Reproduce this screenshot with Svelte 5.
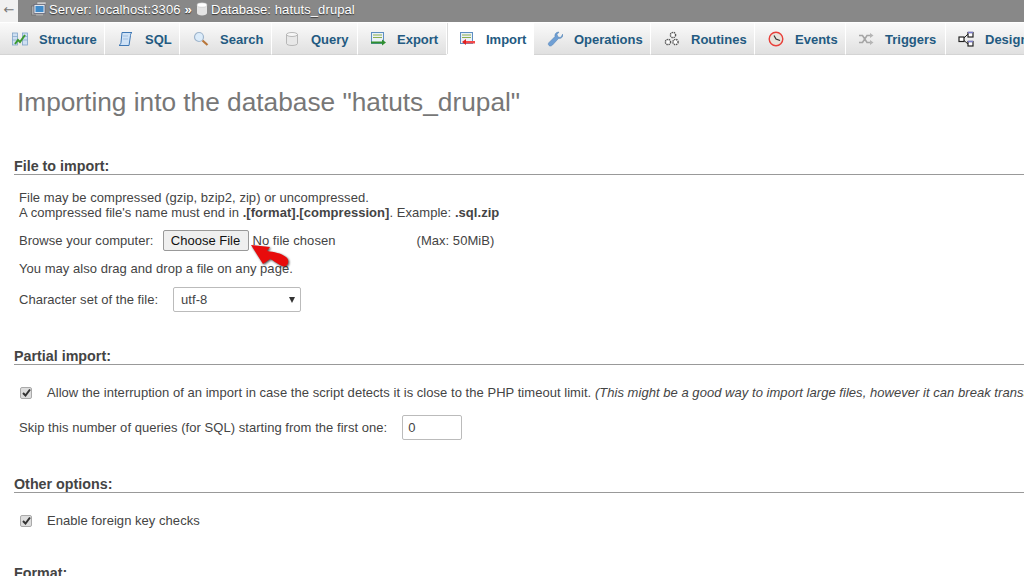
<script lang="ts">
  const tabs = [
    { name: 'Structure', icon: 'structure', w: 105, pad: 12 },
    { name: 'SQL', icon: 'sql', w: 75, pad: 13 },
    { name: 'Search', icon: 'search', w: 92, pad: 13 },
    { name: 'Query', icon: 'query', w: 86, pad: 12 },
    { name: 'Export', icon: 'export', w: 89, pad: 12 },
    { name: 'Import', icon: 'import', w: 87, pad: 12, active: true },
    { name: 'Operations', icon: 'ops', w: 117, pad: 13 },
    { name: 'Routines', icon: 'routines', w: 104, pad: 13 },
    { name: 'Events', icon: 'events', w: 91, pad: 13 },
    { name: 'Triggers', icon: 'triggers', w: 100, pad: 12 },
    { name: 'Designer', icon: 'designer', w: 100, pad: 12 }
  ];
</script>

<div class="page">
  <div class="crumbs">
    <span class="back">←</span>
    <svg class="crumb-ico" width="16" height="16" viewBox="0 0 16 16">
      <rect x="0.500" y="5" width="5" height="9" fill="#aaa" stroke="#666" stroke-width=".6" />
      <rect x="6" y="1" width="9" height="3" fill="#ccc" stroke="#777" stroke-width=".5" />
      <rect x="3" y="3.500" width="11" height="9" fill="#dfe6ee" stroke="#667" stroke-width=".8" />
      <rect x="4.500" y="5" width="8" height="6" fill="#3f8ac9" />
      <rect x="5" y="13" width="7" height="1.500" fill="#aaa" />
    </svg>
    <span>Server: localhost:3306</span>
    <b class="sep">»</b>
    <svg class="crumb-ico db" width="12" height="14" viewBox="0 0 12 14">
      <path d="M1 3v8c0 1.500 2.200 2.500 5 2.500s5-1 5-2.500V3z" fill="#e4e4e4" />
      <ellipse cx="6" cy="3" rx="5" ry="2.200" fill="#fff" stroke="#bbb" stroke-width=".5" />
    </svg>
    <span>Database: hatuts_drupal</span>
  </div>

  <nav class="tabs">
    {#each tabs as tab}
      <a class="tab" class:active={tab.active} style="flex-basis: {tab.w}px; padding-left: {tab.pad}px">
        <svg width="16" height="16" viewBox="0 0 16 16">
          {#if tab.icon === 'structure'}
            <rect x="0.500" y="2" width="5" height="12" fill="#cfe0f2" stroke="#7fa3c9" stroke-width=".8" />
            <rect x="10.500" y="2" width="5" height="12" fill="#cfe0f2" stroke="#7fa3c9" stroke-width=".8" />
            <path d="M0.500 5.500h5M0.500 9h5M10.500 5.500h5M10.500 9h5" stroke="#7fa3c9" stroke-width=".7" />
            <path d="M3 13l3-4 2 2 5-7" fill="none" stroke="#3b9a2f" stroke-width="2" />
          {:else if tab.icon === 'sql'}
            <path d="M4 1.500h10c-1.500 1-1.500 2-1.500 3L11 14.500H1c1.500-1 1.800-2 2-3z" fill="#cfe2f6" stroke="#3f78b5" stroke-width="1" />
            <path d="M5 5h5M5 8h5" stroke="#8fb2d6" stroke-width=".7" />
          {:else if tab.icon === 'search'}
            <circle cx="6" cy="6" r="4.500" fill="#dcecfa" stroke="#9fb5cc" stroke-width="1.200" />
            <path d="M9.500 9.500l5 4.500" stroke="#b8763a" stroke-width="2.200" />
          {:else if tab.icon === 'query'}
            <path d="M2.500 3.500v9c0 1.200 2.500 2 5.500 2s5.500-.8 5.500-2v-9z" fill="#e8e8e8" stroke="#aaa" stroke-width=".8" />
            <ellipse cx="8" cy="3.500" rx="5.500" ry="2" fill="#f6f6f6" stroke="#aaa" stroke-width=".8" />
          {:else if tab.icon === 'export'}
            <rect x="1.500" y="1.500" width="12" height="11" fill="#eaf1f8" stroke="#5d8fc2" />
            <path d="M3 4h9M3 6.500h9" stroke="#8db04f" stroke-width="1" />
            <path d="M1 11.500h11" stroke="#2f8f2f" stroke-width="2" />
            <path d="M12 8.500l4 3-4 3z" fill="#2f8f2f" />
          {:else if tab.icon === 'import'}
            <rect x="1.500" y="1.500" width="12" height="11" fill="#eaf1f8" stroke="#5d8fc2" />
            <path d="M3 4h9M3 6.500h9" stroke="#8db04f" stroke-width="1" />
            <path d="M6 10h10v2.500H6z" fill="#f34a4a" />
            <path d="M7 8l-4 3 4 3z" fill="#e02020" />
          {:else if tab.icon === 'ops'}
            <path d="M2 14.500c-1-1-1-2 0-3l6-6c-.6-2 .8-4.500 4-4.500l-2 2.500 1 2.500 2.500.5L16 3c.3 3-2 5-4.500 4.500l-6 6.500c-1 1-2.500 1.500-3.500.5z" fill="#6f9fd4" stroke="#4f7fb0" stroke-width=".5" />
          {:else if tab.icon === 'routines'}
            <g fill="#fff" stroke="#555" stroke-width="1.400">
              <circle cx="9" cy="4" r="2.600" stroke-dasharray="1.400 .7" />
              <circle cx="4" cy="11" r="2.600" stroke-dasharray="1.400 .7" />
              <circle cx="11.500" cy="11" r="2.600" stroke-dasharray="1.400 .7" />
            </g>
          {:else if tab.icon === 'events'}
            <circle cx="8" cy="8" r="6.800" fill="#e8e4dc" stroke="#e8403a" stroke-width="1.400" />
            <path d="M6 4.500l2 3.500 4 1.500" fill="none" stroke="#333" stroke-width="1.200" />
          {:else if tab.icon === 'triggers'}
            <path d="M1 4.500h3.500l4.500 7h3M1 11.500h3.500l4.500-7h3" fill="none" stroke="#a5a5a5" stroke-width="1.600" />
            <path d="M12 2l3.500 2.500L12 7zM12 9l3.500 2.500L12 14z" fill="#b5b5b5" />
          {:else if tab.icon === 'designer'}
            <g fill="#fff" stroke="#222" stroke-width="1.200">
              <rect x="1" y="6" width="5" height="4.500" />
              <rect x="10" y="1.500" width="5" height="4.500" />
              <rect x="10" y="10.500" width="5" height="4.500" />
            </g>
            <path d="M6 7l4-4M6 9.500l4 3.500" stroke="#222" stroke-width="1" />
            <path d="M10 1.500h5M10 10.500h5" stroke="#7a7ac8" stroke-width="1.600" />
          {/if}
        </svg>
        <span>{tab.name}</span>
      </a>
    {/each}
  </nav>

  <main>
    <h2>Importing into the database "hatuts_drupal"</h2>

    <section class="file-sec">
      <h3>File to import:</h3>
      <p class="note">
        File may be compressed (gzip, bzip2, zip) or uncompressed.<br />
        A compressed file's name must end in <b>.[format].[compression]</b>. Example: <b>.sql.zip</b>
      </p>
      <div class="row browse">
        <span class="label">Browse your computer:</span>
        <button type="button" class="choose">Choose File</button>
        <span class="chosen">No file chosen</span>
        <span class="max">(Max: 50MiB)</span>
        <svg class="arrow" width="48" height="32" viewBox="0 0 48 32">
          <path d="M6 6L25 8L22 12C29 13 36 14 41 18C44 20 44 25 41 27C39 28 37 27 35 26C31 24 28 21 25 20L18 25Z" fill="#e80c0c" />
        </svg>
      </div>
      <p class="drag">You may also drag and drop a file on any page.</p>
      <div class="row charset">
        <span class="label">Character set of the file:</span>
        <div class="select">utf-8<i class="caret"></i></div>
      </div>
    </section>

    <section>
      <h3>Partial import:</h3>
      <div class="check-row">
        <span class="check"><svg width="9" height="9" viewBox="0 0 9 9"><path d="M1 5l2.500 2.500L8 1.500" fill="none" stroke="#333" stroke-width="2" /></svg></span>
        <span>Allow the interruption of an import in case the script detects it is close to the PHP timeout limit. <i>(This might be a good way to import large files, however it can break transactions.)</i></span>
      </div>
      <div class="row skip">
        <span>Skip this number of queries (for SQL) starting from the first one:</span>
        <div class="num">0</div>
      </div>
    </section>

    <section>
      <h3>Other options:</h3>
      <div class="check-row">
        <span class="check"><svg width="9" height="9" viewBox="0 0 9 9"><path d="M1 5l2.500 2.500L8 1.500" fill="none" stroke="#333" stroke-width="2" /></svg></span>
        <span>Enable foreign key checks</span>
      </div>
    </section>

    <section class="format-sec">
      <h3>Format:</h3>
    </section>
  </main>
</div>

<style>
  :global(body) {
    margin: 0;
    background: #fff;
  }

  .page {
    width: 1024px;
    height: 576px;
    overflow: hidden;
    font-family: "Liberation Sans", Arial, sans-serif;
    font-size: 13px;
    color: #444;
  }

  .crumbs {
    height: 22px;
    background: #888;
    display: flex;
    align-items: center;
    color: #fff;
    white-space: nowrap;
    padding-bottom: 4px;
    box-sizing: border-box;
    text-shadow: 0 1px 1px #333;
    letter-spacing: .1px;
  }

  .back {
    align-self: flex-start;
    width: 18px;
    height: 22px;
    margin-right: 13px;
    background: #f1f1f1;
    color: #777;
    font-size: 13px;
    line-height: 20px;
    text-align: center;
    font-family: "DejaVu Sans", sans-serif;
    text-shadow: none;
  }

  .crumb-ico {
    margin-right: 2px;
  }

  .db {
    margin-left: 4px;
    margin-right: 3px;
  }

  .sep {
    margin-left: 4px;
    font-weight: bold;
  }

  .tabs {
    margin-top: 1px;
    height: 32px;
    display: flex;
    overflow: hidden;
    background: #fff;
  }

  .tab {
    flex: 0 0 auto;
    box-sizing: border-box;
    display: flex;
    align-items: center;
    height: 32px;
    padding-top: 1px;
    gap: 11px;
    background: linear-gradient(#fafafa, #e0e0e0);
    border-right: 1px solid #fff;
    border-bottom: 1px solid #d4d4d4;
    color: #235a81;
    font-size: 13px;
    font-weight: bold;
    white-space: nowrap;
  }

  .tab svg {
    flex: none;
  }

  .tab.active {
    background: #fff;
    border-bottom-color: #fff;
    box-shadow: inset 1px 0 0 #ddd;
  }

  main {
    padding-left: 14px;
    letter-spacing: .04px;
  }

  h2 {
    margin: 0 0 0 3px;
    padding-top: 32px;
    font-size: 26.250px;
    line-height: 30px;
    font-weight: normal;
    color: #777;
    white-space: nowrap;
    letter-spacing: 0;
  }

  h3 {
    margin: 0;
    font-size: 14.300px;
    line-height: 15px;
    font-weight: bold;
    color: #444;
    border-bottom: 1px solid #999;
    padding-top: 1px;
    letter-spacing: 0;
  }

  section {
    margin-top: 36px;
  }

  section.file-sec {
    margin-top: 41px;
  }

  section.format-sec {
    margin-top: 37px;
  }

  .note {
    margin: 15px 0 0 5px;
    line-height: 15px;
  }

  .row {
    display: flex;
    align-items: center;
    margin-left: 5px;
    white-space: nowrap;
  }

  .browse {
    position: relative;
    margin-top: 9px;
    height: 22px;
  }

  .label {
    flex: none;
  }

  .choose {
    margin-left: 9px;
    width: 86px;
    height: 21px;
    padding: 0;
    font: 13px "Liberation Sans", Arial, sans-serif;
    color: #111;
    background: #efefef;
    border: 1px solid #999;
    border-radius: 2px;
  }

  .chosen {
    margin-left: 4px;
    width: 164px;
  }

  /* red annotation arrow sits over the form */
  .arrow {
    position: absolute;
    left: 226px;
    top: 10px;
    filter: drop-shadow(1px 1px 1px rgba(0, 0, 0, .7));
  }

  .drag {
    margin: 10px 0 0 5px;
    line-height: 15px;
  }

  .charset {
    margin-top: 11px;
  }

  .select {
    margin-left: 15px;
    box-sizing: border-box;
    position: relative;
    width: 128px;
    height: 25px;
    line-height: 23px;
    padding-left: 7px;
    border: 1px solid #bbb;
    border-radius: 2px;
  }

  .caret {
    position: absolute;
    right: 5px;
    top: 9px;
    border-left: 3.500px solid transparent;
    border-right: 3.500px solid transparent;
    border-top: 6px solid #333;
  }

  .check-row {
    display: flex;
    align-items: center;
    margin: 20px 0 0 6px;
    height: 15px;
    white-space: nowrap;
  }

  .check {
    flex: none;
    box-sizing: border-box;
    width: 12px;
    height: 12px;
    margin-right: 15px;
    border: 1px solid #aaa;
    border-radius: 2px;
    background: #ddd;
    display: flex;
    align-items: center;
    justify-content: center;
  }

  .skip {
    margin-top: 15px;
    gap: 15px;
  }

  .num {
    box-sizing: border-box;
    width: 60px;
    height: 25px;
    line-height: 23px;
    padding-left: 5px;
    border: 1px solid #bbb;
    border-radius: 2px;
  }
</style>
